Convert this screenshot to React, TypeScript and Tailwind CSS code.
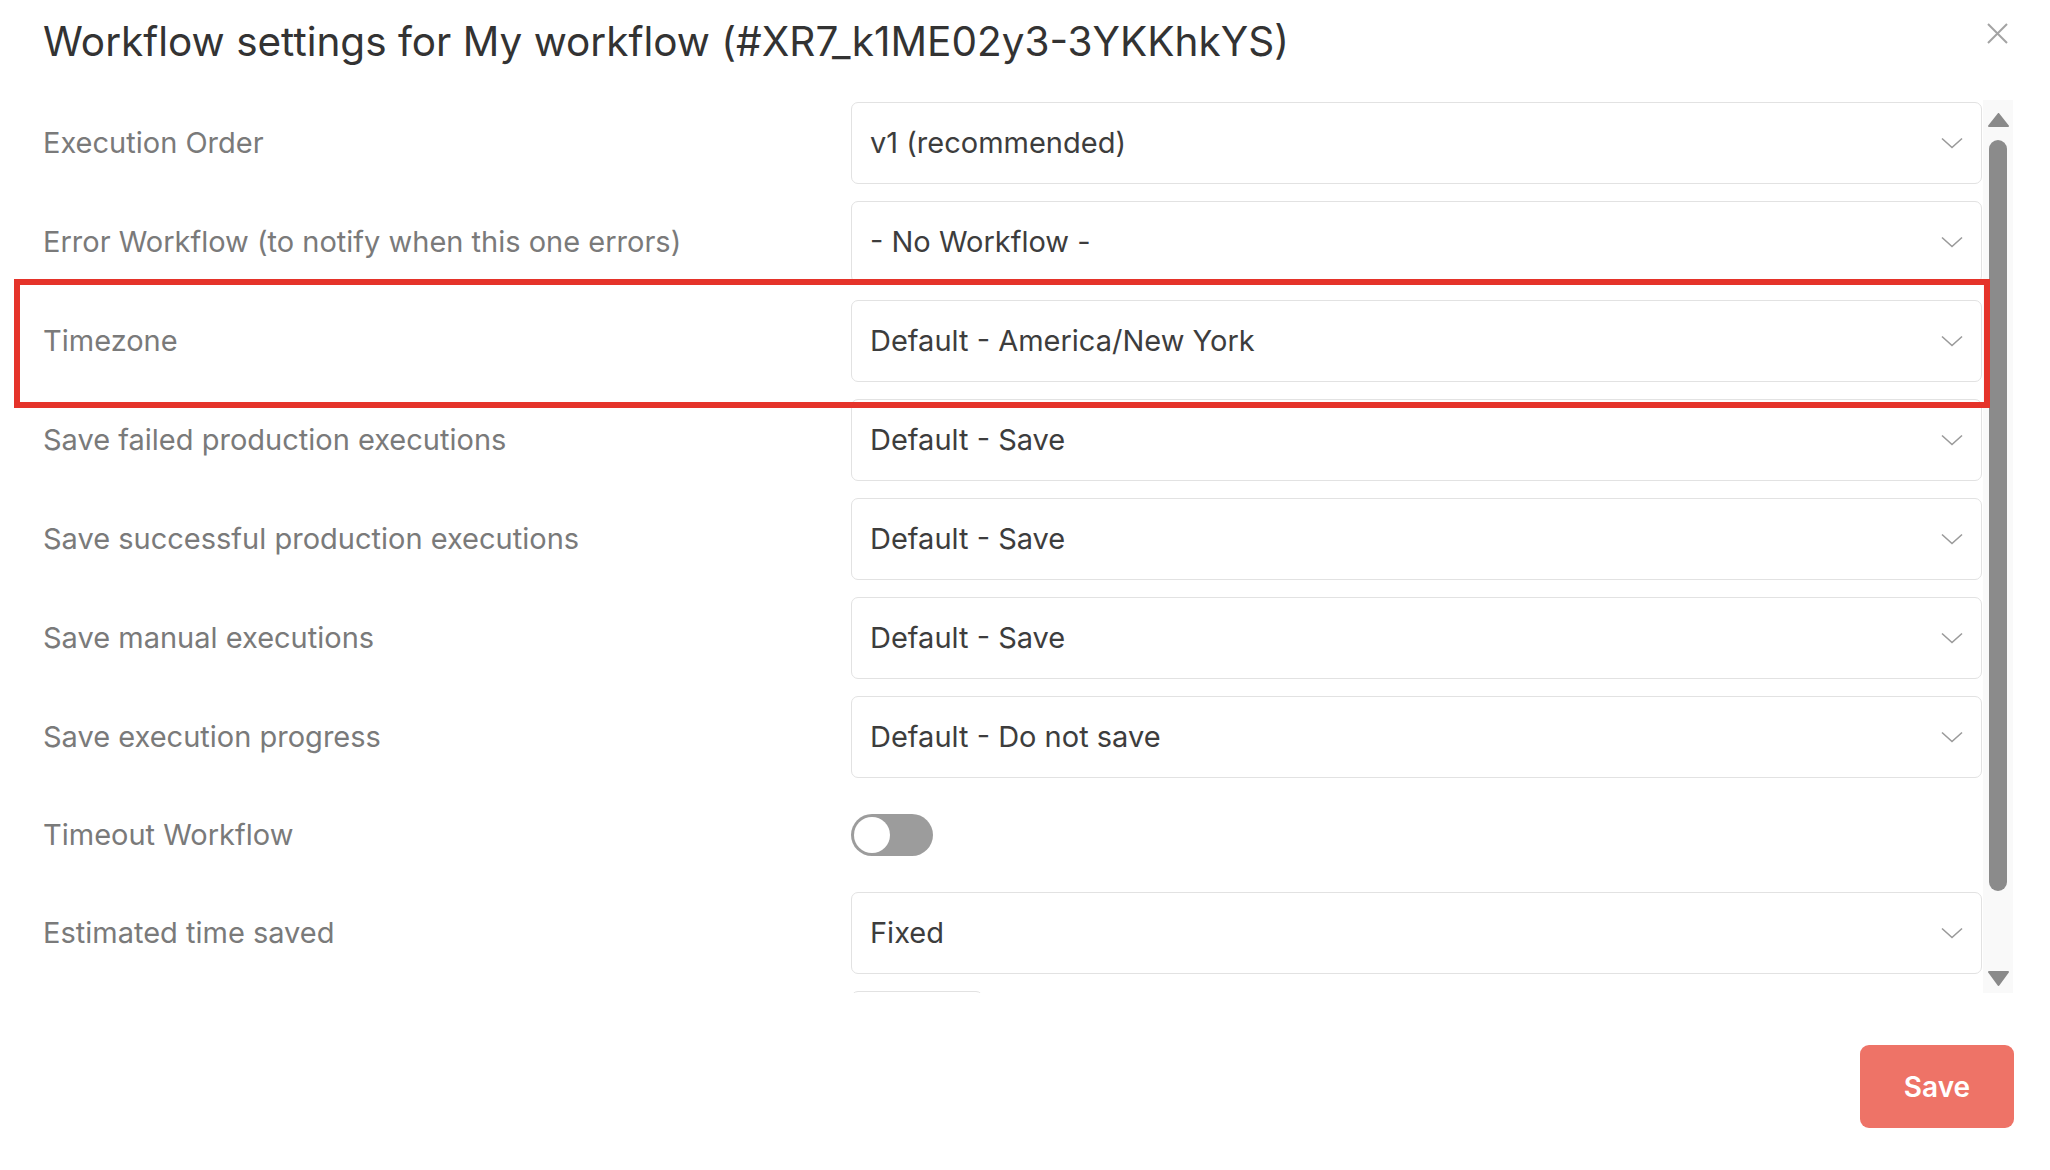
import React from "react";

type Row = { label: string; value?: string; kind?: "select" | "toggle" };

const rows: Row[] = [
  { label: "Execution Order", value: "v1 (recommended)" },
  { label: "Error Workflow (to notify when this one errors)", value: "- No Workflow -" },
  { label: "Timezone", value: "Default - America/New York" },
  { label: "Save failed production executions", value: "Default - Save" },
  { label: "Save successful production executions", value: "Default - Save" },
  { label: "Save manual executions", value: "Default - Save" },
  { label: "Save execution progress", value: "Default - Do not save" },
  { label: "Timeout Workflow", kind: "toggle" },
  { label: "Estimated time saved", value: "Fixed" },
];

function Chevron() {
  return (
    <svg width="22" height="12" viewBox="0 0 22 12" fill="none">
      <path d="M1 1.5 L11 10.5 L21 1.5" stroke="#9a9a9a" strokeWidth="1.6" />
    </svg>
  );
}

function SelectBox({ value }: { value: string }) {
  return (
    <div className="flex h-[82px] w-[1131px] items-center justify-between rounded-[7px] border-[1.5px] border-[#e2e2e2] bg-white pl-[18px] pr-[18px]">
      <span className="text-[29px] text-[#3d3d3d]">{value}</span>
      <Chevron />
    </div>
  );
}

function Toggle() {
  return (
    <div className="flex h-[42px] w-[82px] items-center rounded-full bg-[#9c9c9c] p-[3px]">
      <div className="h-[36px] w-[36px] rounded-full bg-white" />
    </div>
  );
}

export default function App() {
  return (
    <div
      className="relative h-[1170px] w-full bg-white pl-[43px] pr-[37px]"
      style={{ fontFamily: "Inter, 'Noto Sans', sans-serif" }}
    >
      {/* header */}
      <div className="flex h-[100px] items-start pt-[18px]">
        <h1 className="text-[40.5px] leading-[48px] font-normal text-[#333333]">
          Workflow settings for My workflow (#XR7_k1ME02y3-3YKKhkYS)
        </h1>
      </div>
      <button className="absolute left-[1987px] top-[23px]">
        <svg width="21" height="21" viewBox="0 0 21 21">
          <path d="M1 1 L20 20 M20 1 L1 20" stroke="#a3a3a3" strokeWidth="2" />
        </svg>
      </button>

      {/* body */}
      <div className="flex h-[893px]">
        <div className="flex-1 overflow-hidden pt-[2px]">
          <div className="flex flex-col gap-[17px]">
            {rows.map((r, i) => (
              <div
                key={i}
                className={`flex items-center ${r.kind === "toggle" ? "h-[80px]" : "h-[82px]"}`}
              >
                <div className="w-[808px] shrink-0 text-[29px] text-[#7a7a7a]">{r.label}</div>
                {r.kind === "toggle" ? <Toggle /> : <SelectBox value={r.value ?? ""} />}
              </div>
            ))}
            <div className="flex">
              <div className="w-[808px] shrink-0" />
              <div className="h-[40px] w-[132px] rounded-[7px] border-[1.5px] border-[#e2e2e2]" />
            </div>
          </div>
        </div>

        {/* scrollbar */}
        <div className="flex w-[30px] flex-col items-center bg-[#f9f9f9] pt-[13px]">
          <svg width="21" height="14" viewBox="0 0 21 14">
            <path d="M10.5 1 L20 13 L1 13 Z" fill="#8a8a8a" stroke="#8a8a8a" strokeLinejoin="round" strokeWidth="2" />
          </svg>
          <div className="mt-[13px] h-[751px] w-[18px] rounded-full bg-[#8b8b8b]" />
          <div className="flex-1" />
          <svg width="21" height="16" viewBox="0 0 21 16" className="mb-[6px]">
            <path d="M1 1 L20 1 L10.5 14 Z" fill="#8a8a8a" stroke="#8a8a8a" strokeLinejoin="round" strokeWidth="2" />
          </svg>
        </div>
      </div>

      {/* footer */}
      <div className="mt-[52px] flex justify-end">
        <button className="-mr-[1px] h-[83px] w-[154px] rounded-[9px] bg-[#ee7367] text-[28px] font-semibold text-white">
          Save
        </button>
      </div>

      {/* highlight annotation */}
      <div className="pointer-events-none absolute left-[14px] top-[279px] h-[129px] w-[1976px] border-[6px] border-[#e5332a]" />
    </div>
  );
}
